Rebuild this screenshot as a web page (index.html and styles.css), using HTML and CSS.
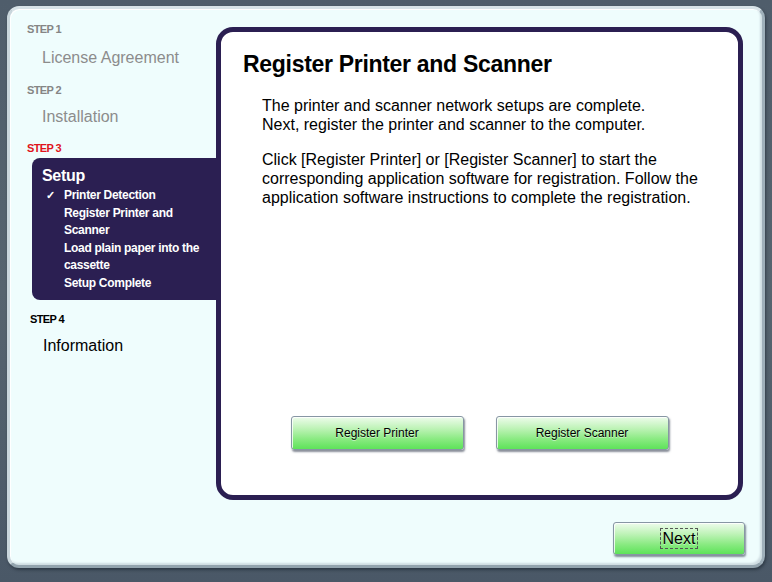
FILE: index.html
```html
<!DOCTYPE html>
<html>
<head>
<meta charset="utf-8">
<link rel="stylesheet" href="styles.css">
</head>
<body>
<div class="window">
  <aside class="sidebar">
    <div class="step-label">STEP 1</div>
    <div class="step-title first">License Agreement</div>
    <div class="step-label second">STEP 2</div>
    <div class="step-title">Installation</div>
    <div class="step-label current third">STEP 3</div>
    <div class="current-box">
      <div class="current-title">Setup</div>
      <ul class="substeps">
        <li class="checked">Printer Detection</li>
        <li>Register Printer and Scanner</li>
        <li>Load plain paper into the cassette</li>
        <li>Setup Complete</li>
      </ul>
    </div>
    <div class="step-label future">STEP 4</div>
    <div class="step-title future-title">Information</div>
  </aside>
  <main class="main">
    <section class="content">
      <h1 class="title">Register Printer and Scanner</h1>
      <div class="body-text">
        <p class="para">The printer and scanner network setups are complete.<br>Next, register the printer and scanner to the computer.</p>
        <p class="para">Click [Register Printer] or [Register Scanner] to start the corresponding application software for registration. Follow the application software instructions to complete the registration.</p>
      </div>
      <div class="actions">
        <button class="btn">Register Printer</button>
        <button class="btn">Register Scanner</button>
      </div>
    </section>
    <div class="footer">
      <button class="btn next"><span class="focus">Next</span></button>
    </div>
  </main>
</div>
</body>
</html>
```

FILE: styles.css
```css
html, body {
  margin: 0;
  padding: 0;
}
body {
  width: 772px;
  height: 582px;
  overflow: hidden;
  background: linear-gradient(180deg, #4f5d6b 0%, #56646f 50%, #4a5867 100%);
  font-family: "Liberation Sans", Arial, Helvetica, sans-serif;
  padding: 6px 0 0 7px;
  box-sizing: border-box;
}
.window {
  box-sizing: border-box;
  width: 758px;
  height: 562px;
  border-radius: 12px;
  border: 3px solid;
  border-color: #d8e3e8 #9fb0ba #93a4ae #c9d6dc;
  background: #effdfd;
  box-shadow: inset 1px 1px 0 #ffffff, inset -2px -2px 2px #cfdde2, 1px 2px 3px rgba(20, 30, 40, 0.5);
  display: flex;
}
.sidebar {
  width: 206px;
  flex: none;
  padding: 13px 0 0 17px;
  box-sizing: border-box;
}
.step-label {
  font-size: 11px;
  font-weight: bold;
  line-height: 14px;
  letter-spacing: -0.6px;
  color: #858585;
}
.step-label.second {
  margin-top: 15px;
}
.step-label.third {
  margin-top: 14px;
}
.step-label.current {
  color: #e0141c;
}
.step-label.future {
  color: #000;
  margin-top: 12px;
  padding-left: 3px;
}
.step-title {
  font-size: 16px;
  line-height: 20px;
  margin-top: 10px;
  padding-left: 15px;
  color: #8c8c8c;
}
.step-title.first {
  margin-top: 12px;
}
.step-title.future-title {
  color: #000;
  margin-top: 10px;
  padding-left: 16px;
}
.current-box {
  margin: 3px 0 0 5px;
  background: #2b1f52;
  border-radius: 8px 0 0 8px;
  padding: 8px 4px 7px 10px;
  color: #fff;
}
.current-title {
  font-size: 16px;
  font-weight: bold;
  line-height: 20px;
  letter-spacing: -0.3px;
}
.substeps {
  list-style: none;
  margin: 0;
  padding: 1px 0 0 22px;
  font-size: 12px;
  font-weight: bold;
  line-height: 17px;
  letter-spacing: -0.3px;
}
.substeps li {
  position: relative;
  margin-bottom: 1px;
}
.substeps li.checked::before {
  content: "\2713";
  position: absolute;
  left: -18px;
  top: 0;
  font-size: 11px;
}
.main {
  width: 530px;
  flex: none;
  padding-top: 18px;
  display: flex;
  flex-direction: column;
}
.content {
  box-sizing: border-box;
  width: 527px;
  height: 473px;
  border: 5px solid #2b1f52;
  border-radius: 17px;
  background: #fff;
  padding: 0 0 0 22px;
  display: flex;
  flex-direction: column;
}
.title {
  margin: 19px 0 0 0;
  font-size: 23px;
  font-weight: bold;
  line-height: 26px;
  letter-spacing: -0.3px;
  color: #000;
}
.body-text {
  padding: 19px 30px 0 19px;
}
.para {
  margin: 0 0 16px 0;
  font-size: 16px;
  line-height: 19px;
  color: #000;
}
.actions {
  margin-top: auto;
  margin-bottom: 45px;
  margin-left: -22px;
  display: flex;
  justify-content: center;
  gap: 32px;
}
.btn {
  box-sizing: border-box;
  width: 173px;
  height: 34px;
  border: 1px solid #8796a4;
  border-radius: 3px;
  background: linear-gradient(180deg, #eefcec 0%, #bff3b8 35%, #88ea80 70%, #5ee35a 100%);
  box-shadow: 1px 2px 2px rgba(40, 50, 70, 0.55), inset 1px 1px 0 rgba(255, 255, 255, 0.8);
  font-family: "Liberation Sans", Arial, Helvetica, sans-serif;
  font-size: 12px;
  color: #000;
  text-shadow: 0 1px 0 rgba(255, 255, 255, 0.5);
  padding: 0;
  cursor: default;
}
.footer {
  display: flex;
  justify-content: flex-end;
  margin-top: 22px;
}
.btn.next {
  width: 132px;
  height: 33px;
  font-size: 16px;
  margin-right: 1px;
}
.focus {
  display: inline-block;
  border: 1px dashed #555;
  padding: 1px 2px 0 2px;
  line-height: 18px;
}
```
